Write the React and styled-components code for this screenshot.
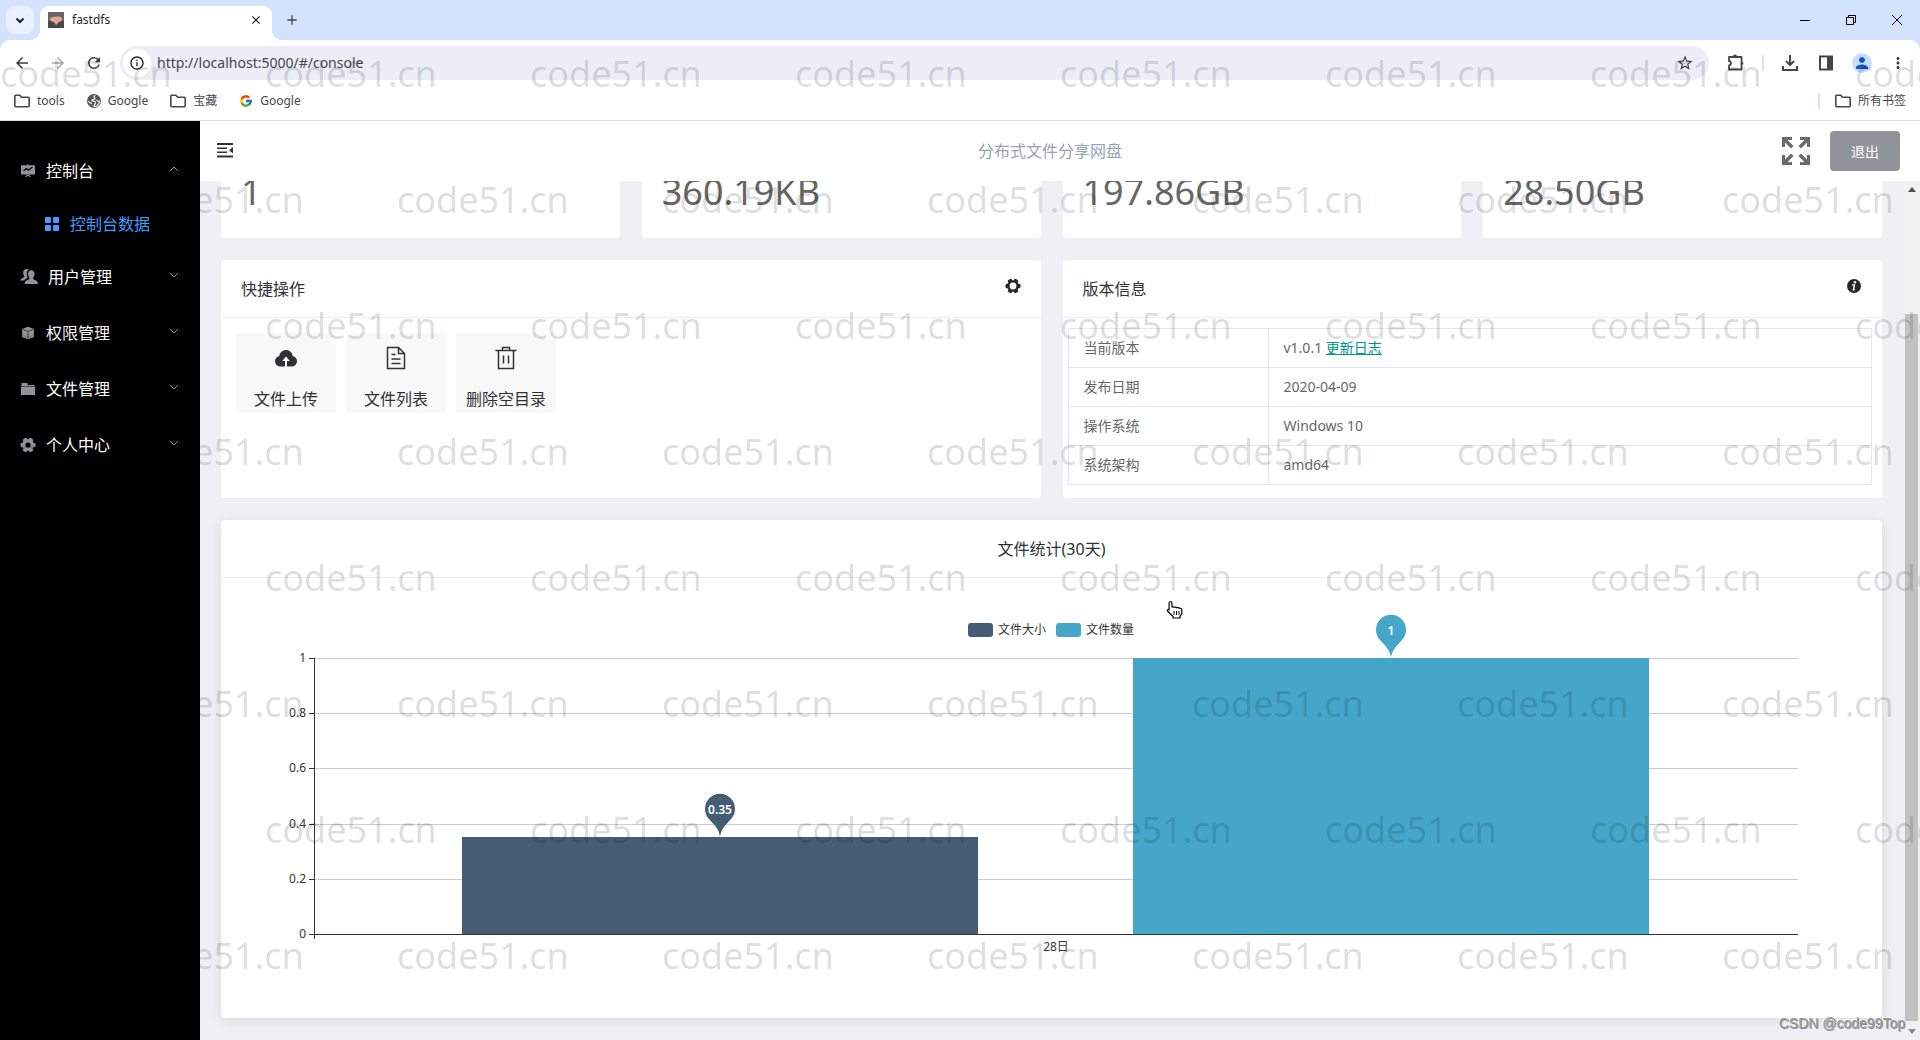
import React, { useEffect, useRef, useState } from 'react';
import styled, { createGlobalStyle } from 'styled-components';
import {
  MdArrowBack,
  MdArrowForward,
  MdRefresh,
  MdClose,
  MdAdd,
  MdStarBorder,
  MdMoreVert,
  MdPerson,
  MdOutlineInfo,
} from 'react-icons/md';
import { FcGoogle } from 'react-icons/fc';

const GlobalStyle = createGlobalStyle`
  * {
    box-sizing: border-box;
  }

  body {
    margin: 0;
    overflow: hidden;
    font-family: 'Noto Sans', 'Noto Sans CJK SC', sans-serif;
    font-size: 14px;
    color: #303133;
  }

  button {
    font-family: inherit;
    padding: 0;
    border: 0;
    background: none;
    color: inherit;
  }

  svg {
    display: block;
    flex: none;
  }
`;

const Window = styled.div`
  position: relative;
  display: flex;
  flex-direction: column;
  height: 100vh;
  overflow: hidden;
  background: #fff;
`;

/* ---------- browser chrome ---------- */

const TabStrip = styled.div`
  display: flex;
  align-items: center;
  height: 40px;
  padding-left: 6px;
  background: #d3e3fd;
`;

const TabSearch = styled.button`
  display: flex;
  align-items: center;
  justify-content: center;
  width: 28px;
  height: 28px;
  border-radius: 9px;
  background: #e9f0fe;
  color: #1f1f1f;
`;

const Tab = styled.div`
  position: relative;
  display: flex;
  align-items: center;
  align-self: flex-end;
  width: 232px;
  height: 34px;
  margin-left: 6px;
  padding: 0 9px 6px 8px;
  border-radius: 9px 9px 0 0;
  background: #fff;

  &::before,
  &::after {
    content: '';
    position: absolute;
    bottom: 0;
    width: 10px;
    height: 10px;
  }

  &::before {
    left: -10px;
    background: radial-gradient(circle at 0 0, transparent 10px, #fff 10px);
  }

  &::after {
    right: -10px;
    background: radial-gradient(circle at 100% 0, transparent 10px, #fff 10px);
  }
`;

const TabTitle = styled.span`
  flex: 1;
  margin-left: 8px;
  font-size: 12px;
  line-height: 16px;
  color: #1f1f1f;
`;

const NewTab = styled.button`
  display: flex;
  margin-left: 12px;
  color: #444746;
`;

const WindowControls = styled.div`
  display: flex;
  gap: 30px;
  margin-left: auto;
  padding-right: 15px;
`;

const Toolbar = styled.div`
  display: flex;
  align-items: center;
  height: 46px;
  padding: 0 13px;
  border-radius: 10px 10px 0 0;
  background: #fff;
  color: #444746;
`;

const ToolbarWrap = styled.div`
  background: #d3e3fd;
`;

const NavButtons = styled.div`
  display: flex;
  gap: 18px;
`;

const IconButton = styled.button`
  display: flex;
  align-items: center;
  justify-content: center;
  width: 18px;
  height: 18px;
  color: ${(props) => (props.$muted ? '#a8a8a8' : '#3c3e3e')};
`;

const Omnibox = styled.div`
  display: flex;
  align-items: center;
  flex: 1;
  height: 34px;
  margin: 0 18px 0 17px;
  padding: 0 15px 0 3px;
  border-radius: 17px;
  background: #ebeef7;
`;

const SiteInfo = styled.button`
  display: flex;
  align-items: center;
  justify-content: center;
  width: 28px;
  height: 28px;
  border-radius: 50%;
  background: #fff;
  color: #1f1f1f;
`;

const Address = styled.input`
  flex: 1;
  margin-left: 6px;
  padding: 0;
  border: 0;
  outline: 0;
  background: none;
  font-family: inherit;
  font-size: 14px;
  line-height: 20px;
  color: #45474a;
`;

const ToolbarActions = styled.div`
  display: flex;
  align-items: center;
  gap: 18px;
`;

const Separator = styled.span`
  width: 2px;
  height: 16px;
  margin: 0 -1px;
  background: #d3e3fd;
`;

const Avatar = styled.span`
  display: flex;
  align-items: center;
  justify-content: center;
  width: 20px;
  height: 20px;
  margin: 0 -1px;
  border-radius: 50%;
  background: #c9dcfc;
  color: #1255c4;
`;

const BookmarkBar = styled.nav`
  display: flex;
  align-items: center;
  height: 35px;
  padding: 0 14px 5px;
  border-bottom: 1px solid #dcdcdc;
  background: #fff;
`;

const Bookmark = styled.a`
  display: flex;
  align-items: center;
  gap: 7px;
  margin-right: 22px;
  font-size: 12px;
  line-height: 16px;
  color: #474747;
  text-decoration: none;

  &:last-child {
    margin: 0 0 0 16px;
  }
`;

const Spacer = styled.span`
  flex: 1;
`;

/* ---------- application ---------- */

const Body = styled.div`
  display: flex;
  flex: 1;
  min-height: 0;
`;

const Sidebar = styled.aside`
  flex: none;
  width: 200px;
  padding-top: 22px;
  background: #000;
`;

const MenuItem = styled.button`
  display: flex;
  align-items: center;
  width: 100%;
  height: 56px;
  padding: 0 19px 0 20px;
  font-size: 16px;
  line-height: 24px;
  color: #fff;

  svg {
    color: #909399;
  }
`;

const MenuLabel = styled.span`
  flex: 1;
  margin-left: 10px;
  text-align: left;
`;

const SubItem = styled.a`
  display: flex;
  align-items: center;
  height: 50px;
  padding-left: 44px;
  font-size: 16px;
  line-height: 24px;
  color: #409eff;
  text-decoration: none;
`;

const Page = styled.div`
  display: flex;
  flex-direction: column;
  flex: 1;
  min-width: 0;
`;

const Header = styled.header`
  display: grid;
  grid-template-columns: 1fr auto 1fr;
  align-items: center;
  flex: none;
  height: 60px;
  padding-right: 20px;
  background: #fff;
`;

const SiteName = styled.span`
  font-size: 16px;
  line-height: 24px;
  color: #97a3b4;
`;

const HeaderLeft = styled.div`
  padding-left: 17px;
`;

const HeaderRight = styled.div`
  display: flex;
  align-items: center;
  justify-content: flex-end;
  gap: 20px;
`;

const PlainButton = styled.button`
  display: flex;
  color: #303133;
`;

const LogoutButton = styled.button`
  width: 70px;
  height: 40px;
  border-radius: 4px;
  background: #909399;
  font-size: 14px;
  color: #fff;
`;

const ScrollArea = styled.div`
  display: flex;
  flex: 1;
  min-height: 0;
  background: #eff0f4;
`;

// The page is scrolled to its end, so the content hangs from the bottom edge
const Content = styled.main`
  display: flex;
  flex-direction: column;
  justify-content: flex-end;
  flex: 1;
  gap: 22px;
  min-width: 0;
  padding: 0 23px 22px 21px;
  overflow: hidden;
`;

const Row = styled.div`
  display: grid;
  grid-template-columns: repeat(${(props) => props.$columns}, 1fr);
  gap: 22px;
  flex: none;
`;

const Card = styled.section`
  flex: none;
  border-radius: 4px;
  background: #fff;
  box-shadow: ${(props) =>
    props.$raised ? '0 2px 12px rgba(0, 0, 0, 0.1)' : 'none'};
`;

const StatCard = styled(Card)`
  padding: 80px 20px 22px;
  font-size: 36px;
  line-height: 48px;
  color: #666;
`;

const CardHead = styled.div`
  display: flex;
  align-items: center;
  justify-content: ${(props) => (props.$center ? 'center' : 'space-between')};
  height: 58px;
  padding: 0 20px;
  border-bottom: 1px solid #ebeef0;

  svg {
    margin-bottom: 6px;
  }
`;

const CardTitle = styled.h2`
  margin: 0;
  font-size: 16px;
  font-weight: 400;
  line-height: 24px;
  color: #303133;
`;

const Shortcuts = styled.div`
  display: flex;
  gap: 10px;
  padding: 15px;
`;

const Shortcut = styled.button`
  display: flex;
  flex-direction: column;
  align-items: center;
  justify-content: space-between;
  width: 100px;
  height: 80px;
  padding-top: 13px;
  background: #f8f8f8;
  font-size: 16px;
  line-height: 28px;
  color: #303133;
`;

const TableWrap = styled.div`
  padding: 10px 10px 13px 5px;
`;

const InfoTable = styled.table`
  width: 100%;
  border-collapse: collapse;
  table-layout: fixed;
  color: #666;

  th,
  td {
    height: 39px;
    padding: 0 15px;
    border: 1px solid #e6e6e6;
    font-size: 14px;
    font-weight: 400;
    line-height: 20px;
    text-align: left;
  }

  th {
    width: 200px;
  }

  a {
    color: #009688;
  }
`;

const ChartBox = styled.div`
  height: 440px;
  padding: 20px;
`;

const ChartSvg = styled.svg`
  width: 100%;
  height: 100%;
  font-size: 12px;
  fill: #333;
`;

const ScrollBar = styled.div`
  display: flex;
  flex-direction: column;
  align-items: center;
  justify-content: space-between;
  width: 15px;
  padding: 6px 2px 6px 0;
  background: #f1f1f1;
`;

const Thumb = styled.div`
  flex: 1;
  align-self: stretch;
  margin: 122px 0 8px;
  background: #c1c1c1;
`;

/* ---------- things lying over the page ---------- */

const Watermark = styled.div`
  position: absolute;
  inset: 0;
  padding-top: 11px;
  overflow: hidden;
  pointer-events: none;
  font-size: 36px;
  line-height: 126px;
  color: rgba(0, 0, 0, 0.14);
`;

const WatermarkRow = styled.div`
  display: flex;
  height: 126px;
  margin-left: ${(props) => (props.$shifted ? '-133px' : '0')};

  span {
    flex: none;
    width: 265px;
  }
`;

const Credit = styled.div`
  position: absolute;
  right: 15px;
  bottom: 6px;
  font-family: 'Liberation Sans', sans-serif;
  font-size: 14px;
  line-height: 22px;
  color: #999;
  text-shadow: 1px 1px 0 #8a8a8a, -1px -1px 0 #fff;
`;

const Pointer = styled.svg`
  position: absolute;
  left: 1166px;
  top: 600px;
`;

const menu = [
  { label: '用户管理', icon: 'users' },
  { label: '权限管理', icon: 'box' },
  { label: '文件管理', icon: 'folder' },
  { label: '个人中心', icon: 'gear' },
];

const stats = ['1', '360.19KB', '197.86GB', '28.50GB'];

const version = [
  ['当前版本', 'v1.0.1'],
  ['发布日期', '2020-04-09'],
  ['操作系统', 'Windows 10'],
  ['系统架构', 'amd64'],
];

const series = [
  { name: '文件大小', value: 0.35, color: '#455d74' },
  { name: '文件数量', value: 1, color: '#45a6ca' },
];

const Gear = ({ color, hole, radius }) => (
  <svg width='16' height='16' viewBox='0 0 16 16'>
    <g fill={color}>
      <circle cx='8' cy='8' r='5.8' />
      {[0, 60, 120].map((angle) => (
        <rect
          key={angle}
          x='0.5'
          y='5.700'
          width='15'
          height='4.600'
          rx='1.500'
          transform={`rotate(${angle} 8 8)`}
        />
      ))}
    </g>
    <circle cx='8' cy='8' r={radius} fill={hole} />
  </svg>
);

const MenuIcon = ({ name }) => {
  switch (name) {
    case 'board':
      return (
        <svg width='16' height='16' viewBox='0 0 16 16' fill='currentColor'>
          <path d='M7.500 1h1v1.200H15v9.300H1V2.200h6.500z' />
          <path d='M3.500 7.800l3-2.300 2 1.700 4-3.200' fill='none' stroke='#000' strokeWidth='1.300' />
          <path d='M5.500 13.800L8 12l2.500 1.800' fill='none' stroke='currentColor' strokeWidth='1.200' />
        </svg>
      );
    case 'grid':
      return (
        <svg width='16' height='16' viewBox='0 0 16 16' fill='currentColor'>
          <rect x='1' y='1' width='6' height='6' rx='1' />
          <rect x='9' y='1' width='6' height='6' rx='1' />
          <rect x='1' y='9' width='6' height='6' rx='1' />
          <rect x='9' y='9' width='6' height='6' rx='1' />
        </svg>
      );
    case 'users':
      return (
        <svg width='18' height='18' viewBox='0 0 18 18' fill='currentColor'>
          <path d='M7 1c.8 0 1.500.2 2 .700C7.400 2.500 6.600 4.200 6.800 6.200c.1 1.400.4 2.400 1 3.300-.6 1.300-2.800 1.500-3.800 3H.3c.2-1.500.9-2 2.900-2.800.9-.4 1.400-.9.9-1.900C3.400 6.800 3 5.500 3.200 4 3.500 2 5 1 7 1z' />
          <path d='M11.200 2.200c2 0 3.300 1.400 3.300 3.500 0 1.500-.3 2.700-1.200 3.900-.5.8-.2 1.600.7 2 2.600 1.100 3.700 1.800 4 4.400H4.600c.2-2.600 1.300-3.300 3.900-4.400.9-.4 1.200-1.200.7-2-.9-1.200-1.200-2.400-1.200-3.900 0-2.100 1.200-3.500 3.200-3.500z' />
          <path d='M8.800 2.300C7.200 3.500 7 6.500 8.200 9' fill='none' stroke='#000' strokeWidth='0.8' />
        </svg>
      );
    case 'box':
      return (
        <svg width='16' height='16' viewBox='0 0 16 16' fill='currentColor'>
          <path d='M8 1.800l6 2.200v8.200L8 14.300 2 12.200V4z' />
          <path d='M3 4.600L8 6.300l5-1.700M8 6.300v7' fill='none' stroke='#333' strokeWidth='0.9' />
        </svg>
      );
    case 'folder':
      return (
        <svg width='16' height='16' viewBox='0 0 16 16' fill='currentColor'>
          <path d='M1.500 2h5.500l1 2h6.500v1h-13zM1 5.500h14V14H1z' />
        </svg>
      );
    default:
      return <Gear color='#909399' hole='#000' radius='2.600' />;
  }
};

const Caret = ({ open }) => (
  <svg width='14' height='14' viewBox='0 0 14 14' fill='none' stroke='currentColor'>
    <path d={open ? 'M3 7l4-4 4 4' : 'M3 3l4 4 4-4'} />
  </svg>
);

const FullscreenIcon = () => (
  <svg width='28' height='28' viewBox='0 0 28 28' fill='#6b6b6b'>
    {[0, 90, 180, 270].map((angle) => (
      <path
        key={angle}
        d='M0 0h10v3H5.500l6 6L9 11.500l-6-6V10H0z'
        transform={`rotate(${angle} 14 14)`}
      />
    ))}
  </svg>
);

const FolderIcon = () => (
  <svg width='16' height='14' viewBox='0 0 16 14' fill='none' stroke='#474747' strokeWidth='1.600'>
    <path d='M1.800 1.300h4l1.700 1.900h6.700a1 1 0 0 1 1 1v7.500a1 1 0 0 1-1 1H1.800a1 1 0 0 1-1-1V2.300a1 1 0 0 1 1-1z' />
  </svg>
);

const BrowserChrome = () => (
  <>
    <TabStrip>
      <TabSearch aria-label='Search tabs'>
        <svg width='16' height='16' viewBox='0 0 16 16' fill='none' stroke='currentColor' strokeWidth='2'>
          <path d='M4.500 6.500L8 10l3.500-3.500' />
        </svg>
      </TabSearch>
      <Tab>
        <svg width='16' height='16' viewBox='0 0 16 16'>
          <rect width='16' height='16' fill='#6a6466' />
          <path d='M0 9h16v7H0z' fill='#4b4648' />
          <path d='M2 7c2-3 9-3 12-1 1 3-1 3-3 4l-3 3-2-3c-2 0-4-1-4-3z' fill='#e8a296' />
        </svg>
        <TabTitle>fastdfs</TabTitle>
        <MdClose size={14} color='#1f1f1f' />
      </Tab>
      <NewTab aria-label='New tab'>
        <MdAdd size={16} />
      </NewTab>
      <WindowControls>
        <svg width='16' height='16' viewBox='0 0 16 16' stroke='#000'>
          <path d='M3 8.500h10' />
        </svg>
        <svg width='16' height='16' viewBox='0 0 16 16' fill='none' stroke='#000'>
          <path d='M3.500 5.500h7v7h-7zM5.500 5.500v-2h7v7h-2' />
        </svg>
        <svg width='16' height='16' viewBox='0 0 16 16' stroke='#000'>
          <path d='M3 3l10 10M13 3L3 13' />
        </svg>
      </WindowControls>
    </TabStrip>
    <ToolbarWrap>
      <Toolbar>
        <NavButtons>
          <IconButton aria-label='Back'>
            <MdArrowBack size={18} />
          </IconButton>
          <IconButton aria-label='Forward' $muted>
            <MdArrowForward size={18} />
          </IconButton>
          <IconButton aria-label='Reload'>
            <MdRefresh size={18} />
          </IconButton>
        </NavButtons>
        <Omnibox>
          <SiteInfo aria-label='Site information'>
            <MdOutlineInfo size={16} />
          </SiteInfo>
          <Address aria-label='Address' defaultValue='http://localhost:5000/#/console' />
          <MdStarBorder size={18} color='#3c3e3e' />
        </Omnibox>
        <ToolbarActions>
          <svg width='18' height='18' viewBox='0 0 18 18' fill='none' stroke='currentColor' strokeWidth='1.800'>
            <path d='M2 3h12.500v12.500H2v-4c2.500-.2 2.500-4.300 0-4.500z' strokeLinejoin='round' />
            <path d='M6 2.500a2 2 0 0 1 4 0zM15 7.500a1.800 1.800 0 0 1 0 3.500z' fill='currentColor' stroke='none' />
          </svg>
          <Separator />
          <svg width='18' height='18' viewBox='0 0 18 18' fill='none' stroke='currentColor' strokeWidth='2'>
            <path d='M9 1v10M5 7l4 4 4-4M2 12v4h14v-4' />
          </svg>
          <svg width='18' height='18' viewBox='0 0 18 18' fill='currentColor'>
            <path d='M3 2.500h12v13H3z' fill='none' stroke='currentColor' strokeWidth='2' />
            <path d='M10 2h5v14h-5z' />
          </svg>
          <Avatar>
            <MdPerson size={18} />
          </Avatar>
          <IconButton aria-label='Menu'>
            <MdMoreVert size={18} />
          </IconButton>
        </ToolbarActions>
      </Toolbar>
    </ToolbarWrap>
    <BookmarkBar>
      <Bookmark href='#tools'>
        <FolderIcon />
        tools
      </Bookmark>
      <Bookmark href='#google'>
        <svg width='14' height='14' viewBox='0 0 14 14'>
          <circle cx='7' cy='7' r='7' fill='#54585c' />
          <path
            d='M8.500 1.500C7 2 6.500 3 7.500 3.800c1.200.8-.2 2-1.500 1.900C4.500 5.600 4.500 7 5.800 7c2 0 3 .8 2.600 2.200-.3 1-1.200 1.300-1.400 3.300 3-.1 5.300-2.300 5.500-5.300-1.500.3-2.700-.2-2.600-1.400M1.500 7.200c.7 1.600 2.700 1.500 3.200 3'
            fill='none'
            stroke='#fff'
            strokeWidth='1.100'
          />
        </svg>
        Google
      </Bookmark>
      <Bookmark href='#treasure'>
        <FolderIcon />
        宝藏
      </Bookmark>
      <Bookmark href='#google2'>
        <FcGoogle size={14} />
        Google
      </Bookmark>
      <Spacer />
      <Separator />
      <Bookmark href='#all'>
        <FolderIcon />
        所有书签
      </Bookmark>
    </BookmarkBar>
  </>
);

const FileChart = () => {
  const boxRef = useRef(null);
  const [width, setWidth] = useState(1621);

  useEffect(() => {
    const handleResize = () => setWidth(boxRef.current.clientWidth - 40);

    handleResize();
    window.addEventListener('resize', handleResize);
    return () => {
      window.removeEventListener('resize', handleResize);
    };
  }, []);

  const left = 73;
  const right = width - 64;
  const top = 60;
  const bottom = 336;
  const plot = right - left;
  const bar = Math.round((plot * 0.8) / 2.3);
  const legend = Math.round(width / 2) - 84;

  return (
    <ChartBox ref={boxRef}>
      <ChartSvg>
        {series.map((s, i) => (
          <g key={s.name}>
            <rect x={legend + i * 88} y='25' width='25' height='14' rx='3' fill={s.color} />
            <text x={legend + i * 88 + 30} y='36'>
              {s.name}
            </text>
          </g>
        ))}
        {[0, 0.2, 0.4, 0.6, 0.8, 1].map((tick) => {
          const y = Math.round(bottom - tick * (bottom - top)) + 0.5;
          return (
            <g key={tick}>
              {tick > 0 && <path d={`M${left} ${y}H${right}`} stroke='#ccc' />}
              <path d={`M${left - 5} ${y}H${left}`} stroke='#333' />
              <text x={left - 8} y={y + 3} textAnchor='end'>
                {tick}
              </text>
            </g>
          );
        })}
        {series.map((s, i) => {
          const x = Math.round(left + plot * 0.1 + i * bar * 1.3);
          const y = Math.round(bottom - s.value * (bottom - top));
          const cx = x + bar / 2;
          return (
            <g key={s.name} fill={s.color}>
              <rect x={x} y={y} width={bar} height={bottom - y} />
              <path
                d={`M${cx} ${y}c-1-8-4-10-11-18a15 15 0 1 1 22 0c-7 8-10 10-11 18z`}
              />
              <text x={cx} y={y - 23} textAnchor='middle' fill='#fff' fontWeight='600'>
                {s.value}
              </text>
            </g>
          );
        })}
        <path
          d={`M${left + 0.5} ${top}V${bottom + 5}M${left} ${bottom + 0.5}H${right}`}
          stroke='#333'
        />
        <text x={(left + right) / 2} y={bottom + 17} textAnchor='middle'>
          28日
        </text>
      </ChartSvg>
    </ChartBox>
  );
};

const App = () => {
  return (
    <Window>
      <GlobalStyle />
      <BrowserChrome />
      <Body>
        <Sidebar>
          <MenuItem>
            <MenuIcon name='board' />
            <MenuLabel>控制台</MenuLabel>
            <Caret open />
          </MenuItem>
          <SubItem href='#/console'>
            <MenuIcon name='grid' />
            <MenuLabel>控制台数据</MenuLabel>
          </SubItem>
          {menu.map((item) => (
            <MenuItem key={item.label}>
              <MenuIcon name={item.icon} />
              <MenuLabel>{item.label}</MenuLabel>
              <Caret />
            </MenuItem>
          ))}
        </Sidebar>

        <Page>
          <Header>
            <HeaderLeft>
              <PlainButton aria-label='Collapse menu'>
                <svg width='16' height='16' viewBox='0 0 16 16' fill='currentColor'>
                  <path d='M0 0h16v2H0zM0 4.500h10v1.500H0zM0 8.500h10V10H0zM0 12.500h16v2H0zM16 4v6.500l-4-3.200z' />
                </svg>
              </PlainButton>
            </HeaderLeft>
            <SiteName>分布式文件分享网盘</SiteName>
            <HeaderRight>
              <PlainButton aria-label='Fullscreen'>
                <FullscreenIcon />
              </PlainButton>
              <LogoutButton>退出</LogoutButton>
            </HeaderRight>
          </Header>

          <ScrollArea>
            <Content>
              <Row $columns={4}>
                {stats.map((value) => (
                  <StatCard key={value}>{value}</StatCard>
                ))}
              </Row>

              <Row $columns={2}>
                <Card>
                  <CardHead>
                    <CardTitle>快捷操作</CardTitle>
                    <Gear color='#24292e' hole='#fff' radius='3.400' />
                  </CardHead>
                  <Shortcuts>
                    <Shortcut>
                      <svg width='24' height='24' viewBox='0 0 24 24' fill='#303133'>
                        <path d='M11 20.500H6.500A5.300 5.300 0 0 1 5.300 10C5.800 6.400 8.500 4 12 4s6.200 2.400 6.700 6a5.300 5.300 0 0 1-1.200 10.500H13V15h2.800L12 10.500 8.200 15H11z' />
                      </svg>
                      文件上传
                    </Shortcut>
                    <Shortcut>
                      <svg width='24' height='24' viewBox='0 0 24 24' fill='none' stroke='#303133' strokeWidth='1.500'>
                        <path d='M3.500 1.500h11l6 6v15h-17zM14.500 1.500v6h6M7.500 8.500h4M7.500 13h9M7.500 17.500h9' />
                      </svg>
                      文件列表
                    </Shortcut>
                    <Shortcut>
                      <svg width='24' height='24' viewBox='0 0 24 24' fill='none' stroke='#303133' strokeWidth='1.500'>
                        <path d='M1.500 4.500h21M4.500 4.500v18h15v-18M8.500 4.500v-3h7v3M9.500 9.500v8M14.500 9.500v8' />
                      </svg>
                      删除空目录
                    </Shortcut>
                  </Shortcuts>
                </Card>

                <Card>
                  <CardHead>
                    <CardTitle>版本信息</CardTitle>
                    <svg width='16' height='16' viewBox='0 0 16 16'>
                      <circle cx='8' cy='8' r='7' fill='#24292e' />
                      <circle cx='9' cy='4.300' r='1.200' fill='#fff' />
                      <path d='M6.300 7h2.200l-1.200 4.800h1.500' fill='none' stroke='#fff' strokeWidth='1.400' />
                    </svg>
                  </CardHead>
                  <TableWrap>
                    <InfoTable>
                      <tbody>
                        {version.map(([name, value], index) => (
                          <tr key={name}>
                            <th scope='row'>{name}</th>
                            <td>
                              {value}
                              {index === 0 && (
                                <>
                                  {' '}
                                  <a href='#changelog'>更新日志</a>
                                </>
                              )}
                            </td>
                          </tr>
                        ))}
                      </tbody>
                    </InfoTable>
                  </TableWrap>
                </Card>
              </Row>

              <Card $raised>
                <CardHead $center>
                  <CardTitle>文件统计(30天)</CardTitle>
                </CardHead>
                <FileChart />
              </Card>
            </Content>
            <ScrollBar>
              <svg width='8' height='5' viewBox='0 0 8 5' fill='#505050'>
                <path d='M0 5l4-5 4 5z' />
              </svg>
              <Thumb />
              <svg width='8' height='5' viewBox='0 0 8 5' fill='#8a8a8a'>
                <path d='M0 0l4 5 4-5z' />
              </svg>
            </ScrollBar>
          </ScrollArea>
        </Page>
      </Body>

      <Watermark aria-hidden='true'>
        {[...Array(8)].map((_, row) => (
          <WatermarkRow key={row} $shifted={row % 2 === 1}>
            {[...Array(9)].map((_, col) => (
              <span key={col}>code51.cn</span>
            ))}
          </WatermarkRow>
        ))}
      </Watermark>
      <Pointer width='18' height='20' viewBox='0 0 18 20'>
        <path
          d='M4.500 1.500c1 0 1.500.6 1.500 1.500v4.500c0-1 2.500-1 2.500.3 0-1 2.600-.8 2.600.4 0-.9 2.500-.7 2.500.5 0-.8 2.200-.6 2.200.8v4l-1.800 3v1.500H7v-1.500L1.500 11c-.7-1 .6-2 1.600-1.200V3c0-.9.4-1.500 1.400-1.500z'
          fill='#fff'
          stroke='#000'
          strokeWidth='1.200'
        />
        <path d='M8 11v4M10.500 11v4M13 11v4' stroke='#000' />
      </Pointer>
      <Credit>CSDN @code99Top</Credit>
    </Window>
  );
};

export default App;
